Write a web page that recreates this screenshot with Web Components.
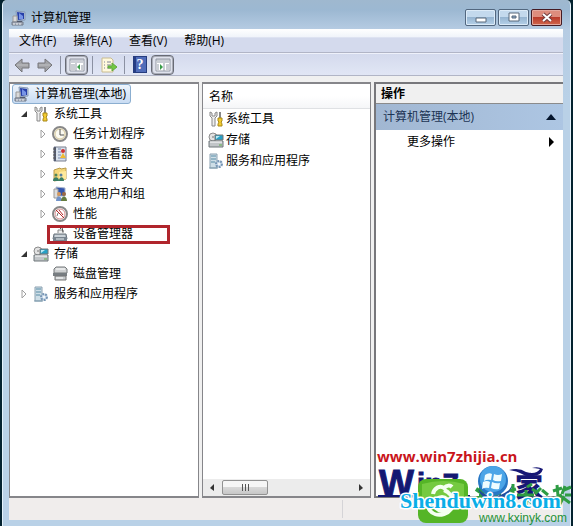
<!DOCTYPE html>
<html lang="zh-CN">
<head>
<meta charset="utf-8">
<title>计算机管理</title>
<style>
  body {
    margin: 0;
    min-height: 100vh;
    display: flex;
    background: #04222f;
    font: 12px/20px "Open Sans", "Noto Sans CJK SC", sans-serif;
    color: #000;
  }
</style>
</head>
<body>
<console-window></console-window>

<script>
'use strict';

const ICONS = {
  computer: `<path d="M5 1l9 1v8l-8 1z" fill="#b9c9df" stroke="#8799b5"/><path d="M6 2l7 1v6l-6 1z" fill="#263fa8"/><path d="M8 3l4 3v3l-4 0z" fill="#7794e6"/><path d="M2 6h4v6H2z" fill="#d9d9d9" stroke="#9a9a9a"/><path d="M6 11h5v2H6z" fill="#30384e"/><path d="M1 12h11v3H1z" fill="#a8afbd" stroke="#737b88"/><path d="M3 13v2m3-2v2m3-2v2" stroke="#eee"/>`,
  tools: `<path d="M2 1v4l2 2v8h3V7l2-2V1L7 2v3H4V2z" fill="#eee" stroke="#888"/><path d="M12 1v6" stroke="#888" stroke-width="2"/><path d="M10 7h4v3l-1 1 1 2v2h-4v-2l1-2-1-1z" fill="#f3cc30" stroke="#a88819"/>`,
  clock: `<circle cx="8" cy="8" r="7" fill="#f8f2df" stroke="#888" stroke-width="2"/><circle cx="8" cy="8" r="5" fill="#fbfaf1" stroke="#d6c99f"/><path d="M8 3v6h4" fill="none" stroke="#555"/>`,
  events: `<path d="M2 1h12v14H2z" fill="#d9e2ee" stroke="#797f8e"/><path d="M3 1v14" stroke="#575f75" stroke-width="2"/><path d="M6 3h3M6 6h3m-3 3h3m-3 3h7" stroke="#798bae"/><circle cx="11" cy="5" r="2" fill="#cf3333"/><path d="M8 12l3-5 3 5z" fill="#f0bb33"/><path d="M1 3h3M1 6h3M1 9h3M1 12h3" stroke="#555"/>`,
  folder: `<path d="M2 4l6-2 1 1 5-1v11l-12 2z" fill="#f4d779" stroke="#b99a4a"/><path d="M7 6l7-1v8l-7 1z" fill="#ffe99b"/><circle cx="4" cy="9" r="1.5" fill="#52875a"/><circle cx="9" cy="9" r="1.5" fill="#587fa1"/><path d="M1 15c0-5 6-5 6 0m0 0c0-5 5-5 5 0" fill="#397d64"/>`,
  users: `<path d="M4 1l9 1v8l-8 0z" fill="#3456ae" stroke="#a6b3cc"/><path d="M2 3h4v9H2z" fill="#ddd" stroke="#999"/><circle cx="7" cy="8" r="2" fill="#d59a5e"/><circle cx="12" cy="8" r="2" fill="#9b6842"/><path d="M4 15c0-6 6-6 6 0z" fill="#7193c9"/><path d="M9 15c0-6 6-6 6 0z" fill="#667c3f"/>`,
  performance: `<circle cx="8" cy="8" r="7" fill="#fff" stroke="#888" stroke-width="2"/><circle cx="8" cy="8" r="5" fill="#fff" stroke="#d48c8c"/><path d="M4 4l8 8M7 4l4 5" stroke="#b52727"/><path d="M5 10l1-3" stroke="#777"/>`,
  device: `<path d="M6 7V4h5v3" fill="#eee" stroke="#888"/><path d="M8 3l2-2 1 5" stroke="#555" fill="none"/><path d="M2 8h12l1 5H1z" fill="#acb6bf" stroke="#69727b"/><path d="M1 11h14v4H1z" fill="#78848f"/><path d="M3 10h10M4 13h8" stroke="#e8eef1"/>`,
  storage: `<circle cx="5" cy="5" r="4" fill="#e2e2e2" stroke="#8c8c8c"/><circle cx="5" cy="5" r="1" fill="#999"/><path d="M7 3h8v5H7z" fill="#25a0c6" stroke="#777"/><path d="M8 4l4 0-4 3z" fill="#bceaf4"/><path d="M1 9h14v6H1z" fill="#c1c5c8" stroke="#6f767b"/><path d="M2 10h12" stroke="#fff"/><path d="M11 13h3" stroke="#58ad48"/>`,
  disk: `<path d="M2 3l2-2h9l2 2v4H2z" fill="#cfd1d2" stroke="#74797b"/><path d="M4 3h9" stroke="#fff"/><path d="M1 7h14v3H1z" fill="#777d81"/><path d="M3 10h11v4H3z" fill="#c5c9cb" stroke="#777"/><path d="M4 12h7" stroke="#fff"/>`,
  services: `<path d="M2 1h7v14H2z" fill="#cedee7" stroke="#8ba1b1"/><path d="M3 3h5M3 6h5M3 9h4" stroke="#578aa4"/><circle cx="11" cy="11" r="3" fill="#cbdbea" stroke="#7896b5" stroke-width="2" stroke-dasharray="2 1"/><circle cx="11" cy="11" r="1" fill="#fff"/><path d="M1 15h9" stroke="#809daf"/>`,
  back: `<path d="M1 8l7-6v4h7v5H8v4z" fill="#a2a3a7" stroke="#76777a"/><path d="M3 8h11" stroke="#bfc0c2"/>`,
  forward: `<path d="M15 8L8 2v4H1v5h7v4z" fill="#a2a3a7" stroke="#76777a"/><path d="M2 8h11" stroke="#bfc0c2"/>`,
  tree: `<path d="M1 2h14v12H1z" fill="#fff" stroke="#9499a5"/><path d="M1 3h14M2 5h12" stroke="#9aa1b0"/><path d="M2 8h4m-4 2h4m-4 2h4M7 6v8m6-6v5" stroke="#959da9"/><path d="M8 10l3-3v6z" fill="#3a9d48"/>`,
  actions: `<path d="M1 2h14v12H1z" fill="#fff" stroke="#9499a5"/><path d="M1 3h14M2 5h12M3 7v6m6-7v8m2-6h3m-3 2h3m-3 2h3" stroke="#959da9"/><path d="M8 10L5 7v6z" fill="#3a9d48"/>`,
  export: `<path d="M1 1h9l2 2v12H1z" fill="#fff9dd" stroke="#c8bb90"/><path d="M3 5h1m2 0h4M3 8h1m2 0h4M3 11h1m2 0h4" stroke="#7c8196"/><path d="M7 9h4V6l5 4-5 4v-3H7z" fill="#71c842" stroke="#61a73e"/>`
};

const base = `
  :host { display: block; box-sizing: border-box; }
  *, *::before { box-sizing: border-box; }
  button { font: inherit; color: inherit; margin: 0; }
`;

class MmcIcon extends HTMLElement {
  constructor() {
    super();
    this.attachShadow({mode: 'open'});
  }
  connectedCallback() {
    this.shadowRoot.innerHTML = `
      <style>
        :host { display: block; flex: none; width: 16px; height: 16px; }
        svg { display: block; width: 100%; height: 100%; }
      </style>
      <svg viewBox="0 0 16 16" aria-hidden="true">${ICONS[this.getAttribute('name')]}</svg>
    `;
  }
}
customElements.define('mmc-icon', MmcIcon);

class TitleBar extends HTMLElement {
  constructor() {
    super();
    this.attachShadow({mode: 'open'}).innerHTML = `
      <style>
        ${base}
        :host {
          display: flex;
          align-items: center;
          gap: 4px;
          height: 29px;
          padding: 6px 0 0 2px;
        }
        h1 { flex: 1; margin: 0; font: inherit; }
        .controls { display: flex; align-self: flex-start; gap: 2px; padding: 3px 1px 0 0; }
        button {
          display: flex;
          align-items: center;
          justify-content: center;
          width: 31px;
          height: 17px;
          padding: 0;
          border: 1px solid #52677f;
          border-radius: 2px;
          box-shadow: inset 0 0 0 1px #dcebf8;
          background: linear-gradient(#c3d9ed 45%, #96b5d1 50%, #b6d1e9);
        }
        .close {
          border-color: #451b23;
          box-shadow: inset 0 0 0 1px #e3a99f;
          background: linear-gradient(#dd8c7d 45%, #b93b2b 50%, #d1674d);
        }
        svg { width: 12px; height: 11px; }
      </style>
      <mmc-icon name="computer"></mmc-icon>
      <h1>计算机管理</h1>
      <div class="controls">
        <button aria-label="最小化"><svg viewBox="0 0 12 11"><path d="M1 6h10v4H1z" fill="#fff" stroke="#59697a"/></svg></button>
        <button aria-label="最大化"><svg viewBox="0 0 12 11"><path d="M1 1h10v8H1z" fill="#fff" stroke="#59697a"/><path d="M4 4h4v2H4z" fill="#8cabc9" stroke="#59697a"/></svg></button>
        <button class="close" aria-label="关闭"><svg viewBox="0 0 12 11"><path d="M2 2l8 7m0-7L2 9" stroke="#703c3e" stroke-width="4"/><path d="M2 2l8 7m0-7L2 9" stroke="#fff" stroke-width="2"/></svg></button>
      </div>
    `;
  }
}
customElements.define('title-bar', TitleBar);

class MenuBar extends HTMLElement {
  constructor() {
    super();
    this.attachShadow({mode: 'open'}).innerHTML = `
      <style>
        ${base}
        :host {
          height: 24px;
          border-bottom: 1px solid #b1b5c6;
          background: linear-gradient(#fff, #f0f4fa 35%, #d4daed 38%, #d4daed);
        }
        nav { display: flex; gap: 17px; padding: 2px 10px; }
        button { padding: 0; border: 0; background: none; }
      </style>
      <nav>
        <button>文件(F)</button>
        <button>操作(A)</button>
        <button>查看(V)</button>
        <button>帮助(H)</button>
      </nav>
    `;
  }
}
customElements.define('menu-bar', MenuBar);

class ToolBar extends HTMLElement {
  constructor() {
    super();
    this.attachShadow({mode: 'open'}).innerHTML = `
      <style>
        ${base}
        :host {
          display: flex;
          align-items: center;
          height: 23px;
          padding: 0 1px;
          border-top: 1px solid #eef1fa;
          border-bottom: 1px solid #b1b5c6;
          background: linear-gradient(#d4daed, #e1e6f5);
        }
        button {
          display: flex;
          align-items: center;
          justify-content: center;
          width: 23px;
          height: 20px;
          padding: 0;
          border: 0;
          background: none;
        }
        .pressed {
          border: 1px solid #686b75;
          border-radius: 4px;
          box-shadow: inset 0 0 0 1px #a9acb7;
          background: #dfe2ec;
        }
        i { width: 1px; height: 18px; margin: 0 4px; background: #8b91a2; }
        .help {
          width: 14px;
          height: 17px;
          margin: 0 4px;
          border: 1px solid #263c7e;
          background: linear-gradient(90deg, #263d85 2px, #506cb9 2px);
          color: #fff;
          font: bold 14px/14px "Liberation Serif", serif;
        }
      </style>
      <button aria-label="后退"><mmc-icon name="back"></mmc-icon></button>
      <button aria-label="前进"><mmc-icon name="forward"></mmc-icon></button>
      <i></i>
      <button class="pressed" aria-label="显示/隐藏控制台树"><mmc-icon name="tree"></mmc-icon></button>
      <i></i>
      <button aria-label="导出列表"><mmc-icon name="export"></mmc-icon></button>
      <i></i>
      <button class="help" aria-label="帮助">?</button>
      <button class="pressed" aria-label="显示/隐藏操作窗格"><mmc-icon name="actions"></mmc-icon></button>
    `;
  }
}
customElements.define('tool-bar', ToolBar);

class TreeNode extends HTMLElement {
  constructor() {
    super();
    this.attachShadow({mode: 'open'});
  }
  connectedCallback() {
    const state = this.getAttribute('state') || 'leaf';
    this.shadowRoot.innerHTML = `
      <style>
        ${base}
        button {
          position: relative;
          display: flex;
          align-items: center;
          height: 20px;
          padding: 0;
          border: 0;
          background: none;
          white-space: nowrap;
        }
        .twist { flex: none; width: 10px; height: 10px; margin-right: 4px; }
        mmc-icon { margin-right: 5px; }
        .root {
          padding: 0 4px 0 1px;
          margin-left: 2px;
          border: 1px solid #8baed0;
          border-radius: 3px;
          background: linear-gradient(#edf4fc, #c9dcf3);
        }
        .children { padding-left: 19px; }
        .root + .children { padding-left: 9px; }
        .marked::after {
          content: "";
          position: absolute;
          inset: 1px -37px 0 9px;
          border: 3px solid #b0252c;
        }
      </style>
      <button class="${state} ${this.hasAttribute('marked') ? 'marked' : ''}">
        ${state === 'root' ? '' : `<svg class="twist" viewBox="0 0 10 10">${
          state === 'open' ? '<path d="M8 2v6H2z" fill="#333"/>' :
          state === 'closed' ? '<path d="M3 1l4 4-4 4z" fill="#fff" stroke="#a0a0a0"/>' : ''
        }</svg>`}
        <mmc-icon name="${this.getAttribute('icon')}"></mmc-icon>
        <span>${this.getAttribute('label')}</span>
      </button>
      <div class="children"><slot></slot></div>
    `;
  }
}
customElements.define('tree-node', TreeNode);

class ResultList extends HTMLElement {
  constructor() {
    super();
    this.attachShadow({mode: 'open'}).innerHTML = `
      <style>
        ${base}
        :host { display: flex; flex-direction: column; min-height: 100%; }
        table { width: 100%; border-collapse: collapse; }
        th {
          height: 24px;
          padding: 2px 6px 0;
          border-bottom: 1px solid #dfe1e4;
          background: linear-gradient(#fff 50%, #f5f6f8);
          font-weight: normal;
          text-align: left;
        }
        td { height: 21px; padding: 0 5px; }
        .item { display: flex; align-items: center; gap: 2px; }
        .scroll {
          display: flex;
          align-items: center;
          height: 17px;
          margin-top: auto;
          padding: 0 4px;
          background: #ececec;
        }
        .scroll button { border: 0; padding: 0; width: 10px; height: 15px; background: none; }
        .scroll svg { display: block; }
        .track { flex: 1; padding: 0 5px; }
        .track button {
          display: flex;
          align-items: center;
          justify-content: center;
          gap: 2px;
          width: 46px;
          border: 1px solid #929292;
          border-radius: 2px;
          background: linear-gradient(#f6f6f6 48%, #d8d8d8 50%, #c7c7c7);
        }
        .track i { width: 1px; height: 7px; background: #555; }
      </style>
      <table>
        <thead><tr><th>名称</th></tr></thead>
        <tbody>
          <tr><td><div class="item"><mmc-icon name="tools"></mmc-icon>系统工具</div></td></tr>
          <tr><td><div class="item"><mmc-icon name="storage"></mmc-icon>存储</div></td></tr>
          <tr><td><div class="item"><mmc-icon name="services"></mmc-icon>服务和应用程序</div></td></tr>
        </tbody>
      </table>
      <div class="scroll">
        <button aria-label="向左滚动"><svg viewBox="0 0 10 15"><path d="M7 4v7L3 8z" fill="#333"/></svg></button>
        <div class="track"><button aria-label="水平滚动条"><i></i><i></i><i></i></button></div>
        <button aria-label="向右滚动"><svg viewBox="0 0 10 15"><path d="M3 4v7l4-3z" fill="#333"/></svg></button>
      </div>
    `;
  }
}
customElements.define('result-list', ResultList);

class ActionPane extends HTMLElement {
  constructor() {
    super();
    this.attachShadow({mode: 'open'}).innerHTML = `
      <style>
        ${base}
        h2 {
          margin: 0;
          height: 20px;
          padding: 0 5px;
          border-bottom: 1px solid #8b8b8b;
          background: #f0f0f0;
          font: bold 12px/20px "Open Sans", "Noto Sans CJK SC", sans-serif;
        }
        button {
          display: flex;
          align-items: center;
          justify-content: space-between;
          width: 100%;
          height: 24px;
          padding: 0 7px;
          border: 0;
          background: none;
        }
        .group {
          height: 26px;
          background: linear-gradient(90deg, #a1b7d2, #adc6e3);
          color: #1c3454;
        }
        .more { padding-left: 31px; }
        svg { width: 10px; height: 10px; }
      </style>
      <h2>操作</h2>
      <button class="group">计算机管理(本地)<svg viewBox="0 0 10 10"><path d="M5 2l5 6H0z" fill="#04142c"/></svg></button>
      <button class="more">更多操作<svg viewBox="0 0 10 10"><path d="M3 0l5 5-5 5z"/></svg></button>
    `;
  }
}
customElements.define('action-pane', ActionPane);

/* Site stamps laid over the lower right corner of the window */
class SiteMarks extends HTMLElement {
  constructor() {
    super();
    this.attachShadow({mode: 'open'}).innerHTML = `
      <style>
        :host {
          position: absolute;
          right: -3px;
          bottom: 0;
          width: 208px;
          height: 86px;
          pointer-events: none;
        }
        svg { display: block; }
      </style>
      <svg width="208" height="86" viewBox="0 0 208 86">
        <text x="12" y="22" font-family="Open Sans" font-size="15" font-weight="700" fill="#c9151b">www.win7zhijia.cn</text>
        <g fill="#141872" stroke="#141872" font-family="Liberation Sans" font-weight="700">
          <text x="14" y="56" font-size="37">W</text>
          <text x="52" y="54" font-size="29">in7.</text>
        </g>
        <path d="M13 56h92" stroke="#141872" stroke-width="2"/>
        <g fill="none" stroke="#2d9c43" stroke-width="4">
          <path d="M111 49l6 4 7-5m-8-2v20m-5-8h17m-9 0l-7 7m8-6l9 4m1-15v17m-5-12h11m-4 0l-4 7 8 5"/>
        </g>
        <path d="M113 49q14 14 31 1l4-6q-3 15-20 17-11-1-15-12z" fill="#204b9a"/>
        <circle cx="128" cy="41" r="15" fill="#2878c5"/>
        <circle cx="128" cy="39" r="13" fill="#4ba5e7"/>
        <path d="M120 35q4-3 7-1l-1 6q-4-1-7 1zM129 34q4 2 8 0l-1 7q-5 1-8-1zM118 42q4-2 7 0l-1 6q-4-1-7 1zM127 42q4 2 8 1l-1 6q-4 1-8-1z" fill="#eefcff"/>
        <path d="M144 30q10-3 17 2 10 3 14-3-5-1-8-1 6-2 11 1-2 7-10 7-7 1-11-2-5-3-13-4z" fill="#171775"/>
        <text x="150" y="58" font-family="Noto Sans CJK SC" font-size="28" font-weight="900" fill="#171775">家</text>
        <g fill="none" stroke="#2d9c43" stroke-width="3">
          <path d="M145 51l6-2m-3-5v9m14-6l5-3m0 5l5 3m4-4l-6 6m-18 1h17m-8-5v15m0-7l7 6m9-14l6 5"/>
          <path d="M188 51l9-3m-5-3l2 21m-4-8l7-3m3-9l-3 8m2-4l7-3m-6 8h6m-7 1l-4 8m2-7l8 6"/>
        </g>
        <rect x="53" y="39" width="50" height="44" rx="8" fill="#55b527"/>
        <path d="M57 44q22-6 42 0v13q-19 5-42 1z" fill="#75ca41"/>
        <g fill="none" stroke="#f4fff0" stroke-width="4">
          <path d="M68 54c1-6 7-9 11-6 3-3 6-3 8-1M79 50c11 4 13 20 0 24s-21-9-12-14"/>
          <circle cx="77" cy="64" r="7"/>
        </g>
        <text x="114" y="82" font-family="Liberation Sans" font-size="12" fill="#259137">www.kxinyk.com</text>
        <text x="35" y="68" font-family="Liberation Serif" font-size="22" font-weight="700" fill="#0aaee7" stroke="#fff" stroke-width="3" stroke-linejoin="round" paint-order="stroke">Shenduwin8.com</text>
      </svg>
    `;
  }
}
customElements.define('site-marks', SiteMarks);

class ConsoleWindow extends HTMLElement {
  constructor() {
    super();
    this.attachShadow({mode: 'open'}).innerHTML = `
      <style>
        ${base}
        :host {
          position: relative;
          flex: 1;
          display: flex;
          flex-direction: column;
          min-width: 0;
          padding: 0 7px 6px 6px;
          margin: 0 2px;
          border: solid #e4f2fb;
          border-width: 0 1px;
          border-radius: 5px 5px 0 0;
          background: linear-gradient(#9fb8cf, #9cb8d2 10px, #b6cce3 30px, #b9d1e7 100px);
        }
        main {
          flex: 1;
          display: grid;
          grid-template-columns: 190fr 169fr 189fr;
          gap: 3px;
          padding-top: 6px;
          background: #f0f0f0;
        }
        section {
          min-width: 0;
          border: 1px solid #86868a;
          border-width: 2px 1px;
          background: #fff;
        }
        .actions { border-width: 2px 0 2px 2px; border-color: #77777b; }
        footer {
          display: grid;
          grid-template-columns: 334fr 220fr;
          height: 22px;
          background: #f0edec;
        }
        footer span { margin: 2px 0; border-right: 1px solid #d5d4d7; }
      </style>
      <title-bar></title-bar>
      <menu-bar></menu-bar>
      <tool-bar></tool-bar>
      <main>
        <section>
          <tree-node state="root" icon="computer" label="计算机管理(本地)">
            <tree-node state="open" icon="tools" label="系统工具">
              <tree-node state="closed" icon="clock" label="任务计划程序"></tree-node>
              <tree-node state="closed" icon="events" label="事件查看器"></tree-node>
              <tree-node state="closed" icon="folder" label="共享文件夹"></tree-node>
              <tree-node state="closed" icon="users" label="本地用户和组"></tree-node>
              <tree-node state="closed" icon="performance" label="性能"></tree-node>
              <tree-node icon="device" label="设备管理器" marked></tree-node>
            </tree-node>
            <tree-node state="open" icon="storage" label="存储">
              <tree-node icon="disk" label="磁盘管理"></tree-node>
            </tree-node>
            <tree-node state="closed" icon="services" label="服务和应用程序"></tree-node>
          </tree-node>
        </section>
        <section><result-list></result-list></section>
        <section class="actions"><action-pane></action-pane></section>
      </main>
      <footer><span></span></footer>
      <site-marks></site-marks>
    `;
  }
}
customElements.define('console-window', ConsoleWindow);
</script>
</body>
</html>
